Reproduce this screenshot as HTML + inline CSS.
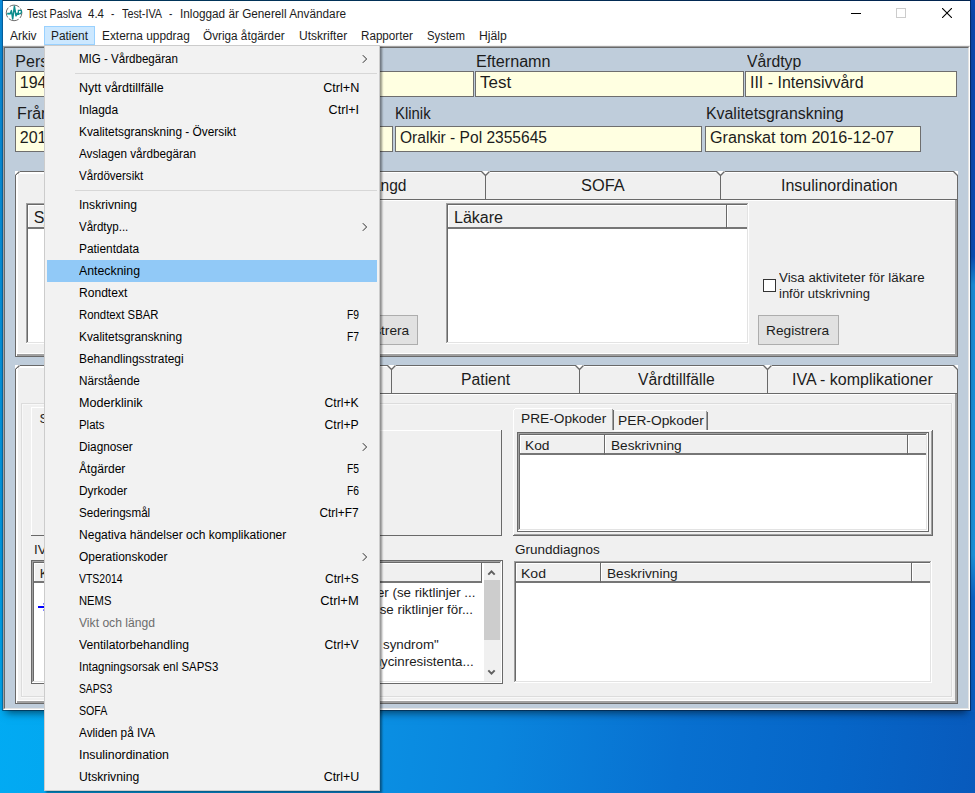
<!DOCTYPE html>
<html lang="sv"><head><meta charset="utf-8"><title>Test Paslva 4.4</title>
<style>
html,body{margin:0;padding:0}
body{width:975px;height:793px;overflow:hidden;position:relative;background:#0a73cf;font-family:"Liberation Sans",sans-serif;color:#000}
div,span{position:absolute;box-sizing:border-box;white-space:nowrap}
#desk{left:0;top:0;width:975px;height:793px;background:linear-gradient(97deg,#00aff6 0%,#04a4ee 20%,#0a93e5 39%,#0a85dd 55%,#0870d0 72%,#0666c8 86%,#085abc 100%)}
#lstrip{left:0;top:0;width:3px;height:712px;background:linear-gradient(180deg,#0a8cdc 0%,#0890dc 22%,#029ce6 75%,#00aaf2 100%)}
#rstrip{left:970px;top:0;width:5px;height:712px;background:linear-gradient(180deg,#0a47ae 0%,#0a4cb4 36%,#1a8cd8 40%,#1c92dc 78%,#0b62c6 84%,#0a5cc0 100%)}
#win{left:2px;top:0;width:969px;height:711px;background:#fff;background-clip:padding-box;border:1px solid rgba(0,20,50,.5);border-top-color:rgba(0,15,40,.75);border-left-color:rgba(0,30,70,.32);box-shadow:0 6px 8px -4px rgba(0,0,0,.55)}
#client{left:3px;top:46px;width:967px;height:664px;background:#bfcddb;border:1px solid;border-color:#a0a0a0 #fff #fff #a0a0a0}
#client i{position:absolute;left:0;top:0;right:0;bottom:0;border:1px solid;border-color:#696969 #e3e3e3 #e3e3e3 #696969}
.seg{font-size:12px;line-height:14px;color:#000}
.a16{font-size:16px;line-height:18px}
.a13{font-size:13.33px;line-height:15px}
.fld{background:#ffffe1;border:1px solid #6e6e6e;height:26px;font-size:16px;line-height:18px;padding:2px 0 0 4px}
.tx{transform-origin:0 0;white-space:pre;color:#1c1c1c}
.btn{background:#e1e1e1;border:1px solid #adadad;text-align:center;line-height:27px!important}
/* menu */
#menu{left:44px;top:45px;width:336px;height:746px;background:#f2f2f2;border:1px solid #ccc;padding:2px;box-shadow:2px 2px 2px rgba(0,0,0,.42)}
#menu .mi{position:relative;display:block;height:22px;width:330px;font-size:12px;line-height:22px}
#menu .mi .t{left:32px;top:0;transform-origin:0 0}
#menu .mi .k{right:18px;top:0;transform-origin:100% 0}
#menu .mi .ar{position:absolute;right:9px;top:6px}
#menu .sep{position:relative;display:block;height:1px;margin:3px 0 3px 28px;background:#d7d7d7;width:302px}
#menu .sel{background:#91c9f7}
#menu .dis{color:#6d6d6d}
</style></head><body>
<div id="desk"></div><div id="lstrip"></div><div id="rstrip"></div>
<div id="win"></div>
<!-- title bar -->
<svg style="position:absolute;left:0;top:0" width="30" height="26" viewBox="0 0 30 26"><circle cx="14.05" cy="12.9" r="7.8" fill="#fff" stroke="#5c5c5c" stroke-width="0.9" stroke-dasharray="10.5 1.75" stroke-dashoffset="-7.3"/><path d="M7.2 14.3 H10.6" stroke="#5fe0e6" stroke-width="1.1" fill="none"/><path d="M7.2 13.6 H10.4 L11.4 10.6 L12.7 19 L14.4 6.3 L16 15.8 L17.3 13.2 L18.3 15" fill="none" stroke="#0c8c8c" stroke-width="1.5" stroke-linejoin="round"/><path d="M18.4 15 V10.4 H20.6 Q21.8 10.6 21.3 12.6 Q20.6 14 18.6 13.8" fill="none" stroke="#0c8c8c" stroke-width="1.3"/></svg>
<div style="left:851px;top:13px;width:10px;height:1px;background:#000"></div>
<div style="left:896px;top:8px;width:10px;height:10px;border:1px solid #ccc"></div>
<svg style="position:absolute;left:942px;top:8px" width="10" height="10" viewBox="0 0 10 10"><path d="M0 0 L10 10 M10 0 L0 10" stroke="#000" stroke-width="1.1" fill="none"/></svg>
<!-- menubar -->
<div style="left:3px;top:45px;width:967px;height:1px;background:#f0f0f0"></div>
<div style="left:44px;top:26px;width:51px;height:19px;background:#cce8ff;border:1px solid #99d1ff"></div>
<div id="client"><i></i></div>
<!-- row 1 -->
<div class="fld" style="left:15px;top:71px;width:459px"></div>
<div class="fld" style="left:475px;top:71px;width:269px"></div>
<div class="fld" style="left:745px;top:71px;width:212px"></div>
<!-- row 2 -->
<div class="fld" style="left:15px;top:126px;width:378px"></div>
<div class="fld" style="left:395px;top:126px;width:307px"></div>
<div class="fld" style="left:705px;top:126px;width:216px"></div>
<svg style="position:absolute;left:0;top:0" width="975" height="793" viewBox="0 0 975 793" shape-rendering="crispEdges">
<rect x="15" y="171" width="943" height="186" fill="#f0f0f0"/>
<rect x="19" y="171" width="228" height="1" fill="#696969"/>
<rect x="19" y="172" width="228" height="1" fill="#ffffff"/>
<rect x="18" y="173" width="229" height="1" fill="#ffffff"/>
<rect x="254" y="171" width="228" height="1" fill="#696969"/>
<rect x="254" y="172" width="228" height="1" fill="#ffffff"/>
<rect x="251" y="199" width="235" height="1" fill="#696969"/>
<rect x="251" y="200" width="235" height="1" fill="#ffffff"/>
<rect x="489" y="171" width="228" height="1" fill="#696969"/>
<rect x="489" y="172" width="228" height="1" fill="#ffffff"/>
<rect x="486" y="199" width="235" height="1" fill="#696969"/>
<rect x="486" y="200" width="235" height="1" fill="#ffffff"/>
<rect x="724" y="171" width="230" height="1" fill="#696969"/>
<rect x="724" y="172" width="230" height="1" fill="#ffffff"/>
<rect x="721" y="199" width="237" height="1" fill="#696969"/>
<rect x="721" y="200" width="236" height="1" fill="#ffffff"/>
<polygon points="15,171 20,171 15,176" fill="#ffffff"/>
<polygon points="958,171 953,171 958,176" fill="#ffffff"/>
<polygon points="16,172 20,172 16,176" fill="#ffffff"/>
<line x1="15.5" y1="175.5" x2="19.5" y2="171.5" stroke="#696969" stroke-width="1.3" shape-rendering="auto"/>
<polygon points="957,172 953,172 957,176" fill="#ffffff"/>
<line x1="953.5" y1="171.5" x2="957.5" y2="175.5" stroke="#696969" stroke-width="1.3" shape-rendering="auto"/>
<polygon points="246,171 255,171 250.5,175.5" fill="#ffffff"/>
<path d="M246.5 171.5 L250.5 175.5 L254.5 171.5" fill="none" stroke="#696969" stroke-width="1.3" shape-rendering="auto"/>
<rect x="250" y="175" width="1" height="25" fill="#696969"/>
<polygon points="481,171 490,171 485.5,175.5" fill="#ffffff"/>
<path d="M481.5 171.5 L485.5 175.5 L489.5 171.5" fill="none" stroke="#696969" stroke-width="1.3" shape-rendering="auto"/>
<rect x="485" y="175" width="1" height="25" fill="#696969"/>
<polygon points="716,171 725,171 720.5,175.5" fill="#ffffff"/>
<path d="M716.5 171.5 L720.5 175.5 L724.5 171.5" fill="none" stroke="#696969" stroke-width="1.3" shape-rendering="auto"/>
<rect x="720" y="175" width="1" height="25" fill="#696969"/>
<rect x="15" y="175" width="1" height="182" fill="#696969"/>
<rect x="16" y="175" width="1" height="181" fill="#ffffff"/>
<rect x="17" y="174" width="1" height="180" fill="#ffffff"/>
<rect x="18" y="353" width="937" height="1" fill="#ffffff"/>
<rect x="957" y="175" width="1" height="182" fill="#696969"/>
<rect x="955" y="200" width="2" height="156" fill="#a0a0a0"/>
<rect x="17" y="354" width="940" height="2" fill="#a0a0a0"/>
<rect x="15" y="356" width="943" height="1" fill="#696969"/>
<rect x="26" y="203" width="305" height="141" fill="#ffffff"/>
<rect x="26" y="203" width="305" height="1" fill="#a0a0a0"/>
<rect x="26" y="203" width="1" height="141" fill="#a0a0a0"/>
<rect x="27" y="204" width="303" height="1" fill="#696969"/>
<rect x="27" y="204" width="1" height="139" fill="#696969"/>
<rect x="26" y="343" width="305" height="1" fill="#ffffff"/>
<rect x="330" y="203" width="1" height="141" fill="#ffffff"/>
<rect x="27" y="342" width="303" height="1" fill="#e3e3e3"/>
<rect x="329" y="204" width="1" height="139" fill="#e3e3e3"/>
<rect x="28" y="205" width="301" height="24" fill="#f0f0f0"/>
<rect x="28" y="227" width="301" height="2" fill="#767676"/>
<rect x="28" y="205" width="301" height="1" fill="#ffffff"/>
<rect x="28" y="205" width="1" height="22" fill="#ffffff"/>
<rect x="320" y="205" width="1" height="24" fill="#696969"/>
<rect x="321" y="205" width="1" height="22" fill="#ffffff"/>
<rect x="446" y="203" width="303" height="141" fill="#ffffff"/>
<rect x="446" y="203" width="303" height="1" fill="#a0a0a0"/>
<rect x="446" y="203" width="1" height="141" fill="#a0a0a0"/>
<rect x="447" y="204" width="301" height="1" fill="#696969"/>
<rect x="447" y="204" width="1" height="139" fill="#696969"/>
<rect x="446" y="343" width="303" height="1" fill="#ffffff"/>
<rect x="748" y="203" width="1" height="141" fill="#ffffff"/>
<rect x="447" y="342" width="301" height="1" fill="#e3e3e3"/>
<rect x="747" y="204" width="1" height="139" fill="#e3e3e3"/>
<rect x="448" y="205" width="299" height="24" fill="#f0f0f0"/>
<rect x="448" y="227" width="299" height="2" fill="#767676"/>
<rect x="448" y="205" width="299" height="1" fill="#ffffff"/>
<rect x="448" y="205" width="1" height="22" fill="#ffffff"/>
<rect x="726" y="205" width="1" height="24" fill="#696969"/>
<rect x="727" y="205" width="1" height="22" fill="#ffffff"/>
<rect x="15" y="365" width="943" height="339" fill="#f0f0f0"/>
<rect x="19" y="365" width="181" height="1" fill="#696969"/>
<rect x="19" y="366" width="181" height="1" fill="#ffffff"/>
<rect x="18" y="367" width="182" height="1" fill="#ffffff"/>
<rect x="207" y="365" width="181" height="1" fill="#696969"/>
<rect x="207" y="366" width="181" height="1" fill="#ffffff"/>
<rect x="204" y="393" width="188" height="1" fill="#696969"/>
<rect x="204" y="394" width="188" height="1" fill="#ffffff"/>
<rect x="395" y="365" width="181" height="1" fill="#696969"/>
<rect x="395" y="366" width="181" height="1" fill="#ffffff"/>
<rect x="392" y="393" width="188" height="1" fill="#696969"/>
<rect x="392" y="394" width="188" height="1" fill="#ffffff"/>
<rect x="583" y="365" width="181" height="1" fill="#696969"/>
<rect x="583" y="366" width="181" height="1" fill="#ffffff"/>
<rect x="580" y="393" width="188" height="1" fill="#696969"/>
<rect x="580" y="394" width="188" height="1" fill="#ffffff"/>
<rect x="771" y="365" width="183" height="1" fill="#696969"/>
<rect x="771" y="366" width="183" height="1" fill="#ffffff"/>
<rect x="768" y="393" width="190" height="1" fill="#696969"/>
<rect x="768" y="394" width="189" height="1" fill="#ffffff"/>
<polygon points="15,365 20,365 15,370" fill="#ffffff"/>
<polygon points="958,365 953,365 958,370" fill="#ffffff"/>
<polygon points="16,366 20,366 16,370" fill="#ffffff"/>
<line x1="15.5" y1="369.5" x2="19.5" y2="365.5" stroke="#696969" stroke-width="1.3" shape-rendering="auto"/>
<polygon points="957,366 953,366 957,370" fill="#ffffff"/>
<line x1="953.5" y1="365.5" x2="957.5" y2="369.5" stroke="#696969" stroke-width="1.3" shape-rendering="auto"/>
<polygon points="199,365 208,365 203.5,369.5" fill="#ffffff"/>
<path d="M199.5 365.5 L203.5 369.5 L207.5 365.5" fill="none" stroke="#696969" stroke-width="1.3" shape-rendering="auto"/>
<rect x="203" y="369" width="1" height="25" fill="#696969"/>
<polygon points="387,365 396,365 391.5,369.5" fill="#ffffff"/>
<path d="M387.5 365.5 L391.5 369.5 L395.5 365.5" fill="none" stroke="#696969" stroke-width="1.3" shape-rendering="auto"/>
<rect x="391" y="369" width="1" height="25" fill="#696969"/>
<polygon points="575,365 584,365 579.5,369.5" fill="#ffffff"/>
<path d="M575.5 365.5 L579.5 369.5 L583.5 365.5" fill="none" stroke="#696969" stroke-width="1.3" shape-rendering="auto"/>
<rect x="579" y="369" width="1" height="25" fill="#696969"/>
<polygon points="763,365 772,365 767.5,369.5" fill="#ffffff"/>
<path d="M763.5 365.5 L767.5 369.5 L771.5 365.5" fill="none" stroke="#696969" stroke-width="1.3" shape-rendering="auto"/>
<rect x="767" y="369" width="1" height="25" fill="#696969"/>
<rect x="15" y="369" width="1" height="335" fill="#696969"/>
<rect x="16" y="369" width="1" height="334" fill="#ffffff"/>
<rect x="17" y="368" width="1" height="333" fill="#ffffff"/>
<rect x="18" y="700" width="937" height="1" fill="#ffffff"/>
<rect x="957" y="369" width="1" height="335" fill="#696969"/>
<rect x="955" y="394" width="2" height="309" fill="#a0a0a0"/>
<rect x="17" y="701" width="940" height="2" fill="#a0a0a0"/>
<rect x="15" y="703" width="943" height="1" fill="#696969"/>
<rect x="21" y="403" width="931" height="1" fill="#dcdcdc"/><rect x="21" y="403" width="1" height="294" fill="#dcdcdc"/><rect x="22" y="404" width="930" height="1" fill="#f8f8f8"/><rect x="22" y="404" width="1" height="293" fill="#f8f8f8"/>
<rect x="21" y="696" width="931" height="1" fill="#dcdcdc"/><rect x="951" y="403" width="1" height="294" fill="#dcdcdc"/><rect x="21" y="697" width="932" height="1" fill="#f8f8f8"/><rect x="952" y="403" width="1" height="295" fill="#f8f8f8"/>
<rect x="31" y="407" width="30" height="1" fill="#ffffff"/><rect x="31" y="407" width="1" height="129" fill="#ffffff"/><rect x="60" y="430" width="442" height="1" fill="#ffffff"/><rect x="31" y="535" width="471" height="1" fill="#696969"/><rect x="501" y="430" width="1" height="106" fill="#696969"/>
<rect x="513" y="430" width="419" height="1" fill="#ffffff"/><rect x="513" y="430" width="1" height="105" fill="#ffffff"/><rect x="513" y="535" width="420" height="1" fill="#696969"/><rect x="932" y="430" width="1" height="106" fill="#696969"/><rect x="514" y="534" width="418" height="1" fill="#a0a0a0"/><rect x="931" y="431" width="1" height="104" fill="#a0a0a0"/>
<rect x="514" y="409" width="100" height="23" fill="#f0f0f0"/>
<rect x="513" y="410" width="1" height="21" fill="#ffffff"/><rect x="514" y="409" width="1" height="1" fill="#ffffff"/><rect x="515" y="408" width="97" height="1" fill="#ffffff"/><rect x="613" y="410" width="1" height="20" fill="#696969"/><rect x="612" y="409" width="1" height="21" fill="#a0a0a0"/>
<rect x="615" y="410" width="91" height="1" fill="#ffffff"/><rect x="707" y="412" width="1" height="18" fill="#696969"/><rect x="706" y="411" width="1" height="19" fill="#a0a0a0"/>
<rect x="517" y="432" width="412" height="100" fill="#ffffff"/>
<rect x="517" y="432" width="412" height="1" fill="#696969"/>
<rect x="517" y="432" width="1" height="100" fill="#696969"/>
<rect x="517" y="531" width="412" height="1" fill="#696969"/>
<rect x="928" y="432" width="1" height="100" fill="#696969"/>
<rect x="518" y="433" width="410" height="1" fill="#a0a0a0"/>
<rect x="518" y="433" width="1" height="98" fill="#a0a0a0"/>
<rect x="519" y="434" width="408" height="1" fill="#696969"/>
<rect x="519" y="434" width="1" height="96" fill="#696969"/>
<rect x="518" y="530" width="410" height="1" fill="#ffffff"/>
<rect x="927" y="433" width="1" height="98" fill="#ffffff"/>
<rect x="519" y="529" width="408" height="1" fill="#e3e3e3"/>
<rect x="926" y="434" width="1" height="96" fill="#e3e3e3"/>
<rect x="520" y="435" width="406" height="20" fill="#f0f0f0"/>
<rect x="520" y="453" width="406" height="2" fill="#767676"/>
<rect x="520" y="435" width="406" height="1" fill="#ffffff"/>
<rect x="520" y="435" width="1" height="18" fill="#ffffff"/>
<rect x="604" y="435" width="1" height="20" fill="#696969"/>
<rect x="605" y="435" width="1" height="18" fill="#ffffff"/>
<rect x="907" y="435" width="1" height="20" fill="#696969"/>
<rect x="908" y="435" width="1" height="18" fill="#ffffff"/>
<rect x="514" y="561" width="418" height="122" fill="#ffffff"/>
<rect x="514" y="561" width="418" height="1" fill="#a0a0a0"/>
<rect x="514" y="561" width="1" height="122" fill="#a0a0a0"/>
<rect x="515" y="562" width="416" height="1" fill="#696969"/>
<rect x="515" y="562" width="1" height="120" fill="#696969"/>
<rect x="514" y="682" width="418" height="1" fill="#ffffff"/>
<rect x="931" y="561" width="1" height="122" fill="#ffffff"/>
<rect x="515" y="681" width="416" height="1" fill="#e3e3e3"/>
<rect x="930" y="562" width="1" height="120" fill="#e3e3e3"/>
<rect x="516" y="563" width="414" height="20" fill="#f0f0f0"/>
<rect x="516" y="581" width="414" height="2" fill="#767676"/>
<rect x="516" y="563" width="414" height="1" fill="#ffffff"/>
<rect x="516" y="563" width="1" height="18" fill="#ffffff"/>
<rect x="600" y="563" width="1" height="20" fill="#696969"/>
<rect x="601" y="563" width="1" height="18" fill="#ffffff"/>
<rect x="911" y="563" width="1" height="20" fill="#696969"/>
<rect x="912" y="563" width="1" height="18" fill="#ffffff"/>
<rect x="31" y="560" width="472" height="124" fill="#ffffff"/>
<rect x="31" y="560" width="472" height="1" fill="#696969"/>
<rect x="31" y="560" width="1" height="124" fill="#696969"/>
<rect x="31" y="683" width="472" height="1" fill="#696969"/>
<rect x="502" y="560" width="1" height="124" fill="#696969"/>
<rect x="32" y="561" width="470" height="1" fill="#a0a0a0"/>
<rect x="32" y="561" width="1" height="122" fill="#a0a0a0"/>
<rect x="33" y="562" width="468" height="1" fill="#696969"/>
<rect x="33" y="562" width="1" height="120" fill="#696969"/>
<rect x="32" y="682" width="470" height="1" fill="#ffffff"/>
<rect x="501" y="561" width="1" height="122" fill="#ffffff"/>
<rect x="33" y="681" width="468" height="1" fill="#e3e3e3"/>
<rect x="500" y="562" width="1" height="120" fill="#e3e3e3"/>
<rect x="34" y="563" width="448" height="20" fill="#f0f0f0"/>
<rect x="34" y="581" width="448" height="2" fill="#767676"/>
<rect x="34" y="563" width="448" height="1" fill="#ffffff"/>
<rect x="34" y="563" width="1" height="18" fill="#ffffff"/>
<rect x="481" y="563" width="1" height="20" fill="#696969"/>
<rect x="484" y="563" width="17" height="118" fill="#f0f0f0"/>
<rect x="484" y="580" width="16" height="60" fill="#cdcdcd"/>
<path d="M488.3 574.6 L491.5 571.4 L494.7 574.6" fill="none" stroke="#606060" stroke-width="2" shape-rendering="auto"/>
<path d="M488.3 670.4 L491.5 673.6 L494.7 670.4" fill="none" stroke="#606060" stroke-width="2" shape-rendering="auto"/>
<rect x="38" y="606" width="12" height="2" fill="#0000ff"/>
<path d="M43.5 603.5 L47 607 L43.5 610.5" fill="none" stroke="#00f" stroke-width="1.2" shape-rendering="auto"/>
</svg>
<div style="left:763px;top:279px;width:13px;height:13px;background:#fff;border:1px solid #333"></div>
<div class="btn" style="left:758px;top:315px;width:81px;height:30px"></div>
<div class="btn" style="left:337px;top:315px;width:81px;height:30px"></div>
<div class="tx" style="left:27.49px;top:6.54px;font-size:12px;line-height:15px;transform:scaleX(0.891)">Test Paslva</div>
<div class="tx" style="left:88.37px;top:6.54px;font-size:12px;line-height:15px;transform:scaleX(0.9611)">4.4</div>
<div class="tx" style="left:110.90px;top:6.54px;font-size:12px;line-height:15px;transform:scaleX(0.8333)">-</div>
<div class="tx" style="left:122.48px;top:6.54px;font-size:12px;line-height:15px;transform:scaleX(0.9017)">Test-IVA</div>
<div class="tx" style="left:169.40px;top:6.54px;font-size:12px;line-height:15px;transform:scaleX(0.8333)">-</div>
<div class="tx" style="left:179.54px;top:6.54px;font-size:12px;line-height:15px;transform:scaleX(0.9802)">Inloggad är Generell Användare</div>
<div class="tx" style="left:10.20px;top:29.44px;font-size:12px;line-height:15px;transform:scaleX(0.9975)">Arkiv</div>
<div class="tx" style="left:50.85px;top:29.44px;font-size:12px;line-height:15px;transform:scaleX(0.99)">Patient</div>
<div class="tx" style="left:101.55px;top:29.44px;font-size:12px;line-height:15px;transform:scaleX(0.9893)">Externa uppdrag</div>
<div class="tx" style="left:202.97px;top:29.44px;font-size:12px;line-height:15px;transform:scaleX(0.9785)">Övriga åtgärder</div>
<div class="tx" style="left:298.70px;top:29.44px;font-size:12px;line-height:15px;transform:scaleX(1.0033)">Utskrifter</div>
<div class="tx" style="left:360.67px;top:29.44px;font-size:12px;line-height:15px;transform:scaleX(0.9704)">Rapporter</div>
<div class="tx" style="left:427.29px;top:29.44px;font-size:12px;line-height:15px;transform:scaleX(0.9455)">System</div>
<div class="tx" style="left:478.62px;top:29.44px;font-size:12px;line-height:15px;transform:scaleX(1.0158)">Hjälp</div>
<div class="tx" style="left:15.32px;top:51.66px;font-size:16px;line-height:20px;transform:scaleX(1)">Personnummer</div>
<div class="tx" style="left:475.61px;top:51.96px;font-size:16px;line-height:20px;transform:scaleX(1.0104)">Efternamn</div>
<div class="tx" style="left:746.70px;top:51.96px;font-size:16px;line-height:20px;transform:scaleX(0.982)">Vårdtyp</div>
<div class="tx" style="left:17.12px;top:103.96px;font-size:16px;line-height:20px;transform:scaleX(1)">Från</div>
<div class="tx" style="left:395.11px;top:103.96px;font-size:16px;line-height:20px;transform:scaleX(0.9316)">Klinik</div>
<div class="tx" style="left:706.03px;top:103.96px;font-size:16px;line-height:20px;transform:scaleX(0.9921)">Kvalitetsgranskning</div>
<div class="tx" style="left:19.80px;top:72.96px;font-size:16px;line-height:20px;transform:scaleX(1)">1944</div>
<div class="tx" style="left:479.66px;top:72.96px;font-size:16px;line-height:20px;transform:scaleX(1.0629)">Test</div>
<div class="tx" style="left:749.56px;top:72.96px;font-size:16px;line-height:20px;transform:scaleX(0.9973)">III - Intensivvård</div>
<div class="tx" style="left:19.80px;top:127.76px;font-size:16px;line-height:20px;transform:scaleX(1)">2016</div>
<div class="tx" style="left:399.90px;top:127.76px;font-size:16px;line-height:20px;transform:scaleX(0.9719)">Oralkir - Pol 2355645</div>
<div class="tx" style="left:709.59px;top:127.76px;font-size:16px;line-height:20px;transform:scaleX(1.009)">Granskat tom 2016-12-07</div>
<div class="tx" style="left:95.00px;top:175.66px;font-size:16px;line-height:20px;transform:scaleX(1)">Aktiviteter</div>
<div class="tx" style="left:309.28px;top:175.66px;font-size:16px;line-height:20px;transform:scaleX(0.9726)">Vikt och längd</div>
<div class="tx" style="left:581.06px;top:175.66px;font-size:16px;line-height:20px;transform:scaleX(1.0236)">SOFA</div>
<div class="tx" style="left:780.56px;top:175.66px;font-size:16px;line-height:20px;transform:scaleX(1.0008)">Insulinordination</div>
<div class="tx" style="left:33.78px;top:207.66px;font-size:16px;line-height:20px;transform:scaleX(1)">Sjuksköterska</div>
<div class="tx" style="left:453.72px;top:207.66px;font-size:16px;line-height:20px;transform:scaleX(1.0025)">Läkare</div>
<div class="tx" style="left:779.30px;top:269.08px;font-size:13.33px;line-height:17px;transform:scaleX(0.9996)">Visa aktiviteter för läkare</div>
<div class="tx" style="left:778.86px;top:285.08px;font-size:13.33px;line-height:17px;transform:scaleX(0.9742)">inför utskrivning</div>
<div class="tx" style="left:766.30px;top:322.08px;font-size:13.33px;line-height:17px;transform:scaleX(1.0286)">Registrera</div>
<div class="tx" style="left:346.10px;top:322.08px;font-size:13.33px;line-height:17px;transform:scaleX(1.0286)">Registrera</div>
<div class="tx" style="left:95.56px;top:369.76px;font-size:16px;line-height:20px;transform:scaleX(1)">IVA</div>
<div class="tx" style="left:260.72px;top:369.76px;font-size:16px;line-height:20px;transform:scaleX(1)">Diagnoser</div>
<div class="tx" style="left:461.44px;top:369.76px;font-size:16px;line-height:20px;transform:scaleX(0.9838)">Patient</div>
<div class="tx" style="left:637.50px;top:369.76px;font-size:16px;line-height:20px;transform:scaleX(0.9794)">Vårdtillfälle</div>
<div class="tx" style="left:792.06px;top:369.76px;font-size:16px;line-height:20px;transform:scaleX(0.9977)">IVA - komplikationer</div>
<div class="tx" style="left:39.40px;top:410.18px;font-size:13.33px;line-height:17px;transform:scaleX(1)">SAPS3</div>
<div class="tx" style="left:520.70px;top:410.18px;font-size:13.33px;line-height:17px;transform:scaleX(1.0277)">PRE-Opkoder</div>
<div class="tx" style="left:617.60px;top:411.78px;font-size:13.33px;line-height:17px;transform:scaleX(1.0351)">PER-Opkoder</div>
<div class="tx" style="left:525.40px;top:437.18px;font-size:13.33px;line-height:17px;transform:scaleX(1.035)">Kod</div>
<div class="tx" style="left:610.61px;top:437.18px;font-size:13.33px;line-height:17px;transform:scaleX(1.0251)">Beskrivning</div>
<div class="tx" style="left:515.02px;top:541.28px;font-size:13.33px;line-height:17px;transform:scaleX(1.0132)">Grunddiagnos</div>
<div class="tx" style="left:34.00px;top:541.28px;font-size:13.33px;line-height:17px;transform:scaleX(1)">IVA - diagnoser</div>
<div class="tx" style="left:521.28px;top:565.28px;font-size:13.33px;line-height:17px;transform:scaleX(1.0533)">Kod</div>
<div class="tx" style="left:606.51px;top:565.28px;font-size:13.33px;line-height:17px;transform:scaleX(1.0251)">Beskrivning</div>
<div class="tx" style="left:39.73px;top:565.28px;font-size:13.33px;line-height:17px;transform:scaleX(1)">Kod</div>
<div class="tx" style="right:499.6px;top:585px;font-size:13.33px;line-height:15px;text-align:right">A41.9 Sepsis utan känt fokus, hos patienter (se riktlinjer ...</div>
<div class="tx" style="right:502px;top:602.2px;font-size:13.33px;line-height:15px;text-align:right">R57.2 Septisk chock, se riktlinjer för...</div>
<div class="tx" style="right:536.2px;top:636.6px;font-size:13.33px;line-height:15px;text-align:right">J80.9 "Acute respiratory distress syndrom"</div>
<div class="tx" style="right:501.4px;top:653.8px;font-size:13.33px;line-height:15px;text-align:right">A49.0B Infektion med vankomycinresistenta...</div>
<!--P2-->
<!-- popup menu -->
<div id="menu">
<div class="mi"><span class="t" style="transform:scaleX(0.9628)">MIG - Vårdbegäran</span><svg class="ar" width="6" height="10" viewBox="0 0 6 10"><path d="M0.8 1.2 L4.6 5 L0.8 8.8" fill="none" stroke="#2a2a2a" stroke-width="1"/></svg></div>
<div class="sep"></div>
<div class="mi"><span class="t" style="transform:scaleX(1.0398)">Nytt vårdtillfälle</span><span class="k" style="transform:scaleX(1.054)">Ctrl+N</span></div>
<div class="mi"><span class="t" style="transform:scaleX(0.993)">Inlagda</span><span class="k" style="transform:scaleX(1.0477)">Ctrl+I</span></div>
<div class="mi"><span class="t" style="transform:scaleX(0.9897)">Kvalitetsgranskning - Översikt</span></div>
<div class="mi"><span class="t" style="transform:scaleX(0.976)">Avslagen vårdbegäran</span></div>
<div class="mi"><span class="t" style="transform:scaleX(0.9625)">Vårdöversikt</span></div>
<div class="sep"></div>
<div class="mi"><span class="t" style="transform:scaleX(1.0094)">Inskrivning</span></div>
<div class="mi"><span class="t" style="transform:scaleX(0.9599)">Vårdtyp...</span><svg class="ar" width="6" height="10" viewBox="0 0 6 10"><path d="M0.8 1.2 L4.6 5 L0.8 8.8" fill="none" stroke="#2a2a2a" stroke-width="1"/></svg></div>
<div class="mi"><span class="t" style="transform:scaleX(0.9898)">Patientdata</span></div>
<div class="mi sel"><span class="t" style="transform:scaleX(1.0274)">Anteckning</span></div>
<div class="mi"><span class="t" style="transform:scaleX(1.0056)">Rondtext</span></div>
<div class="mi"><span class="t" style="transform:scaleX(0.9459)">Rondtext SBAR</span><span class="k" style="transform:scaleX(0.8562)">F9</span></div>
<div class="mi"><span class="t" style="transform:scaleX(0.9898)">Kvalitetsgranskning</span><span class="k" style="transform:scaleX(0.8562)">F7</span></div>
<div class="mi"><span class="t" style="transform:scaleX(0.9924)">Behandlingsstrategi</span></div>
<div class="mi"><span class="t" style="transform:scaleX(0.9783)">Närstående</span></div>
<div class="mi"><span class="t" style="transform:scaleX(1.048)">Moderklinik</span><span class="k" style="transform:scaleX(1.0152)">Ctrl+K</span></div>
<div class="mi"><span class="t" style="transform:scaleX(0.9518)">Plats</span><span class="k" style="transform:scaleX(1.0152)">Ctrl+P</span></div>
<div class="mi"><span class="t" style="transform:scaleX(0.9817)">Diagnoser</span><svg class="ar" width="6" height="10" viewBox="0 0 6 10"><path d="M0.8 1.2 L4.6 5 L0.8 8.8" fill="none" stroke="#2a2a2a" stroke-width="1"/></svg></div>
<div class="mi"><span class="t" style="transform:scaleX(1.008)">Åtgärder</span><span class="k" style="transform:scaleX(0.8562)">F5</span></div>
<div class="mi"><span class="t" style="transform:scaleX(0.992)">Dyrkoder</span><span class="k" style="transform:scaleX(0.8562)">F6</span></div>
<div class="mi"><span class="t" style="transform:scaleX(0.9704)">Sederingsmål</span><span class="k" style="transform:scaleX(0.9902)">Ctrl+F7</span></div>
<div class="mi"><span class="t" style="transform:scaleX(1.0024)">Negativa händelser och komplikationer</span></div>
<div class="mi"><span class="t" style="transform:scaleX(0.9964)">Operationskoder</span><svg class="ar" width="6" height="10" viewBox="0 0 6 10"><path d="M0.8 1.2 L4.6 5 L0.8 8.8" fill="none" stroke="#2a2a2a" stroke-width="1"/></svg></div>
<div class="mi"><span class="t" style="transform:scaleX(0.8712)">VTS2014</span><span class="k" style="transform:scaleX(0.9974)">Ctrl+S</span></div>
<div class="mi"><span class="t" style="transform:scaleX(0.9345)">NEMS</span><span class="k" style="transform:scaleX(1.0765)">Ctrl+M</span></div>
<div class="mi dis"><span class="t" style="transform:scaleX(1.011)">Vikt och längd</span></div>
<div class="mi"><span class="t" style="transform:scaleX(1.0113)">Ventilatorbehandling</span><span class="k" style="transform:scaleX(1.0152)">Ctrl+V</span></div>
<div class="mi"><span class="t" style="transform:scaleX(0.9535)">Intagningsorsak enl SAPS3</span></div>
<div class="mi"><span class="t" style="transform:scaleX(0.8552)">SAPS3</span></div>
<div class="mi"><span class="t" style="transform:scaleX(0.8839)">SOFA</span></div>
<div class="mi"><span class="t" style="transform:scaleX(0.9793)">Avliden på IVA</span></div>
<div class="mi"><span class="t" style="transform:scaleX(1.0297)">Insulinordination</span></div>
<div class="mi"><span class="t" style="transform:scaleX(1.0142)">Utskrivning</span><span class="k" style="transform:scaleX(1.0395)">Ctrl+U</span></div>
</div>
</body></html>
